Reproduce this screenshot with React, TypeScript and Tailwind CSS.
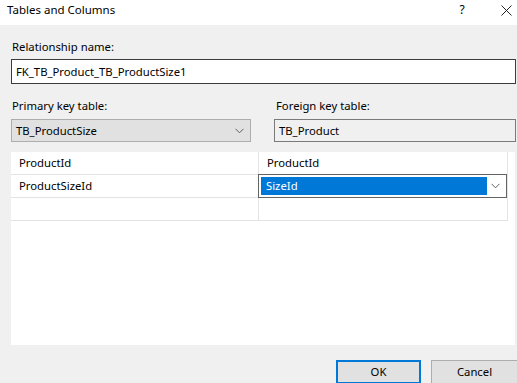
const FONT = "font-['Noto_Sans','Noto_Sans_CJK_KR',sans-serif]";

function Chevron({ className }: { className?: string }) {
  return (
    <svg width="9" height="6" viewBox="0 0 9 6" className={className}>
      <path d="M0.5 0.8 L4.5 4.8 L8.5 0.8" fill="none" stroke="#606060" strokeWidth="1" />
    </svg>
  );
}

const ROWS = [
  { pk: "ProductId", fk: "ProductId" },
  { pk: "ProductSizeId", fk: "SizeId" },
  { pk: "", fk: "" },
];

export default function App() {
  return (
    <div className={`flex h-[383px] w-[517px] flex-col overflow-hidden bg-[#f0f0f0] text-[11.3px] leading-[16px] text-black ${FONT}`}>
      {/* title bar */}
      <div className="flex h-[25px] shrink-0 items-start bg-white pl-[7px] pt-[2px]">
        <span className="text-[11.5px]">Tables and Columns</span>
        <span className="ml-auto w-[10px] text-center text-[12px]">?</span>
        <span className="ml-[32px] mr-[4px] flex h-[16px] w-[14px] items-center justify-center">
          <svg width="11" height="11" viewBox="0 0 11 11">
            <path d="M0.5 0.5 L10.5 10.5 M10.5 0.5 L0.5 10.5" stroke="#222" strokeWidth="1" />
          </svg>
        </span>
      </div>

      <div className="flex flex-col pl-[11px] pr-[1px]">
        <label className="mt-[14px] pl-[1px]">Relationship name:</label>
        <div className="mt-[4px] flex h-[25px] items-center border border-[#3c3c3c] bg-white pl-[4px]">
          FK_TB_Product_TB_ProductSize1
        </div>

        <div className="mt-[14px] flex">
          <div className="flex w-[240px] flex-col">
            <label className="pl-[1px]">Primary key table:</label>
            <div className="mt-[5px] flex h-[23px] items-center border border-[#adadad] bg-[#e1e1e1] pl-[4px] pr-[6px]">
              <span>TB_ProductSize</span>
              <Chevron className="ml-auto" />
            </div>
          </div>
          <div className="ml-[23px] flex flex-1 flex-col">
            <label className="pl-[2px]">Foreign key table:</label>
            <div className="mt-[5px] flex h-[23px] items-center border border-[#7a7a7a] bg-[#f0f0f0] pl-[4px]">
              TB_Product
            </div>
          </div>
        </div>

        {/* columns grid */}
        <div className="mt-[10px] mr-[1px] flex h-[193px] bg-white">
          <div className="flex w-[497px] flex-col self-start border-r border-[#e3e3e3]">
            {ROWS.map((r, i) => (
              <div key={i} className="flex h-[23px] border-b border-[#e3e3e3]">
                <div className="flex w-[248px] items-center border-r border-[#e3e3e3] pl-[8px]">{r.pk}</div>
                {i === 1 ? (
                  <div className="-ml-[1px] -mt-[1px] flex h-[24px] flex-1 items-center border border-[#646464] bg-white p-[2px] pr-[6px]">
                    <div className="flex h-[18px] w-[226px] items-center bg-[#0078d7] pl-[5px] text-white">{r.fk}</div>
                    <Chevron className="ml-auto" />
                  </div>
                ) : (
                  <div className="flex flex-1 items-center pl-[8px]">{r.fk}</div>
                )}
              </div>
            ))}
          </div>
        </div>

        {/* buttons */}
        <div className="mt-[15px] flex justify-end gap-[10px]">
          <button className="flex h-[24px] w-[85px] items-center justify-center border-2 border-[#0078d7] bg-[#e1e1e1]">OK</button>
          <button className="-mr-[2px] flex h-[24px] w-[87px] items-center justify-center border border-[#adadad] bg-[#e1e1e1]">Cancel</button>
        </div>
      </div>
    </div>
  );
}
